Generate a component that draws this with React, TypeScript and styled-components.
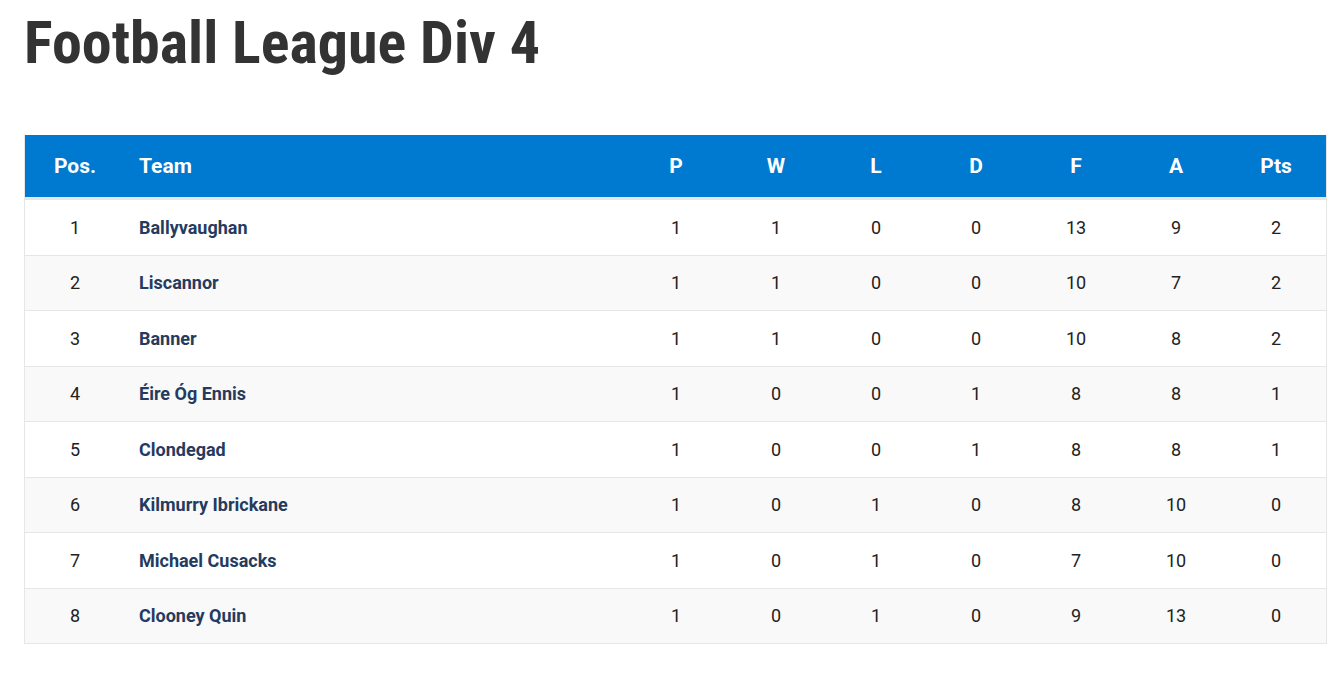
import React from "react";
import styled, { createGlobalStyle } from "styled-components";

const Global = createGlobalStyle`
  html, body { margin: 0; padding: 0; background: #fff; }
  body { font-family: Roboto, "Liberation Sans", sans-serif; }
`;

const Page = styled.div`
  padding: 0 17px 0 24px;
`;

const Title = styled.h1`
  margin: 0;
  padding-top: 8px;
  height: 135px;
  box-sizing: border-box;
  font-family: "Roboto Condensed", Roboto, sans-serif;
  font-stretch: condensed;
  font-weight: 700;
  font-size: 60px;
  line-height: 70px;
  color: #333;
`;

const Table = styled.table`
  width: 1303px;
  border-collapse: separate;
  border-spacing: 0;
  border-left: 1px solid #e6e6e6;
  border-right: 1px solid #e6e6e6;
`;

const Th = styled.th<{ $align?: string; $w?: number }>`
  height: 65px;
  box-sizing: border-box;
  padding: 0 ${(p) => (p.$align === "left" ? "14px" : "0")};
  text-align: ${(p) => p.$align || "center"};
  width: ${(p) => (p.$w ? `${p.$w}px` : "auto")};
  background: #0079d0;
  border-bottom: 3px solid #e6e6e6;
  color: #fff;
  font-weight: 700;
  font-size: 21px;
  font-family: Roboto, sans-serif;
`;

const Td = styled.td<{ $align?: string; $alt: boolean }>`
  height: 55.5px;
  box-sizing: border-box;
  padding: 0 ${(p) => (p.$align === "left" ? "14px" : "0")};
  text-align: ${(p) => p.$align || "center"};
  background: ${(p) => (p.$alt ? "#f9f9f9" : "#fff")};
  border-bottom: 1px solid #e6e6e6;
  font-size: 18px;
  color: #222;
`;

const TeamName = styled.span`
  font-weight: 700;
  color: #253b5e;
`;

const rows: [number, string, number[]][] = [
  [1, "Ballyvaughan", [1, 1, 0, 0, 13, 9, 2]],
  [2, "Liscannor", [1, 1, 0, 0, 10, 7, 2]],
  [3, "Banner", [1, 1, 0, 0, 10, 8, 2]],
  [4, "Éire Óg Ennis", [1, 0, 0, 1, 8, 8, 1]],
  [5, "Clondegad", [1, 0, 0, 1, 8, 8, 1]],
  [6, "Kilmurry Ibrickane", [1, 0, 1, 0, 8, 10, 0]],
  [7, "Michael Cusacks", [1, 0, 1, 0, 7, 10, 0]],
  [8, "Clooney Quin", [1, 0, 1, 0, 9, 13, 0]],
];

const cols = ["P", "W", "L", "D", "F", "A", "Pts"];

export default function App() {
  return (
    <>
      <Global />
      <Page>
        <Title>Football League Div 4</Title>
        <Table>
          <thead>
            <tr>
              <Th $w={100}>Pos.</Th>
              <Th $align="left">Team</Th>
              {cols.map((c) => (
                <Th key={c} $w={100}>
                  {c}
                </Th>
              ))}
            </tr>
          </thead>
          <tbody>
            {rows.map(([pos, team, vals], i) => {
              const alt = i % 2 === 1;
              return (
                <tr key={pos}>
                  <Td $alt={alt}>{pos}</Td>
                  <Td $alt={alt} $align="left">
                    <TeamName>{team}</TeamName>
                  </Td>
                  {vals.map((v, j) => (
                    <Td key={j} $alt={alt}>
                      {v}
                    </Td>
                  ))}
                </tr>
              );
            })}
          </tbody>
        </Table>
      </Page>
    </>
  );
}
